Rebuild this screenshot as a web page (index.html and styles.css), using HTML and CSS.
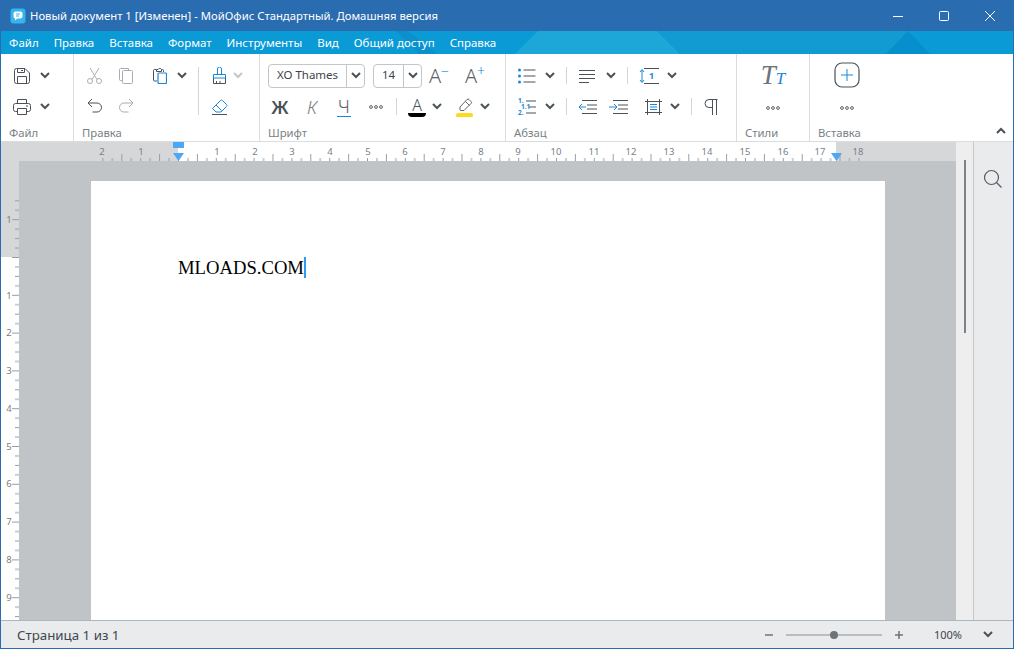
FILE: index.html
```html
<!DOCTYPE html>
<html lang="ru">
<head>
    <meta charset="UTF-8">
    <title>МойОфис Стандартный</title>
    <link rel="stylesheet" href="styles.css">
</head>
<body>
<svg class="defs" width="0" height="0">
    <symbol id="chev" viewBox="0 0 10 7"><path d="M1 1l4 4 4-4" fill="none" stroke="currentColor" stroke-width="2"/></symbol>
    <symbol id="dots" viewBox="0 0 14 4" ><g fill="none" stroke="currentColor"><circle cx="2" cy="2" r="1.4"/><circle cx="7" cy="2" r="1.4"/><circle cx="12" cy="2" r="1.4"/></g></symbol>
</svg>
<div class="window">
    <!-- заголовок -->
    <div class="titlebar">
        <svg class="app-icon" width="16" height="16" viewBox="0 0 16 16"><rect width="15" height="15" x="0.5" y="0.5" rx="3" fill="#35b4ee"/><path d="M3.500 5.500a2 2 0 0 1 2-2h5a2 2 0 0 1 2 2v3a2 2 0 0 1-2 2H7l-2 2v-2a2 2 0 0 1-1.500-2z" fill="#fff"/><path d="M6 6h4M6 8h3" stroke="#35b4ee"/></svg>
        <span class="title">Новый документ 1 [Изменен] - МойОфис Стандартный. Домашняя версия</span>
        <div class="win-btns">
            <svg width="12" height="12" viewBox="0 0 12 12"><path d="M1 6.500h10" stroke="#fff"/></svg>
            <svg width="12" height="12" viewBox="0 0 12 12"><rect x="1.500" y="1.500" width="9" height="9" rx="1" fill="none" stroke="#fff"/></svg>
            <svg width="12" height="12" viewBox="0 0 12 12"><path d="M1 1l10 10M11 1L1 11" stroke="#fff"/></svg>
        </div>
    </div>

    <!-- меню -->
    <div class="menubar">
        <svg class="menu-bg" width="1012" height="23" viewBox="0 0 1012 23">
            <path d="M537 0h119l23 23H514z" fill="#1ca7d8"/>
            <path d="M656 0h251l-22 23H679z" fill="#129bd2"/>
            <path d="M907 0l22 23h-44z" fill="#058fcc"/>
            <path d="M395 0h12l29 23h-18z" fill="#0a90cc"/>
        </svg>
        <span>Файл</span><span>Правка</span><span>Вставка</span><span>Формат</span><span>Инструменты</span><span>Вид</span><span>Общий доступ</span><span>Справка</span>
    </div>

    <!-- лента -->
    <div class="ribbon">
        <div class="group g-file">
            <div class="grid">
                <svg width="16" height="16" viewBox="0 0 16 16" class="ic"><path d="M2.500.5h8.500l4.500 4.500v8.500a2 2 0 0 1-2 2h-11a2 2 0 0 1-2-2v-11a2 2 0 0 1 2-2z" fill="none" stroke="currentColor"/><path d="M3.500.5v4h7v-4M7 2.500h2M3.500 15.500v-7h9v7" fill="none" stroke="currentColor"/></svg>
                <svg class="chev"><use href="#chev"/></svg>
                <svg width="18" height="16" viewBox="0 0 18 16" class="ic"><path d="M4.500 4.500v-4h9v4M4 12.500H2.500a2 2 0 0 1-2-2v-4a2 2 0 0 1 2-2h13a2 2 0 0 1 2 2v4a2 2 0 0 1-2 2H14" fill="none" stroke="currentColor"/><path d="M4.500 9.500h9v6h-9zM13 7h2" fill="none" stroke="currentColor"/></svg>
                <svg class="chev"><use href="#chev"/></svg>
            </div>
            <div class="group-label">Файл</div>
        </div>

        <div class="group g-edit">
            <div class="grid">
                <svg width="15" height="16" viewBox="0 0 15 16" class="off"><path d="M3 0l7 11.500M12 0 5 11.500" fill="none" stroke="currentColor"/><circle cx="3" cy="13" r="2.500" fill="none" stroke="currentColor"/><circle cx="12" cy="13" r="2.500" fill="none" stroke="currentColor"/></svg>
                <svg width="14" height="16" viewBox="0 0 14 16" class="off"><path d="M9.500 2.500v-2h-8a1 1 0 0 0-1 1v10a1 1 0 0 0 1 1h2" fill="none" stroke="currentColor"/><rect x="3.500" y="2.500" width="10" height="13" rx="1" fill="none" stroke="currentColor"/></svg>
                <svg width="14" height="17" viewBox="0 0 14 17" class="ic"><path d="M3.500 2.500h-2a1 1 0 0 0-1 1v9.500a1 1 0 0 0 1 1H4M10.500 5V3.500a1 1 0 0 0-1-1h-1M3.500 4.500v-2h1.500a2 2 0 0 1 3.500 0v2z" fill="none" stroke="currentColor"/><rect x="5" y="6" width="8.500" height="10.500" rx="1" fill="none" stroke="#1b87d8" stroke-width="1.200"/></svg>
                <svg class="chev"><use href="#chev"/></svg>
                <div class="sep tall"></div>
                <svg width="15" height="17" viewBox="0 0 15 17" class="ic"><path d="M5.500 7V2a2 2 0 0 1 4 0v5M1.500 7.500h12v3.500h-12z" fill="none" stroke="#1b87d8"/><path d="M1.500 11v5.500h12V11M4.500 16v-2M8 16v-2" fill="none" stroke="currentColor"/></svg>
                <svg class="chev dim"><use href="#chev"/></svg>
                <svg class="nudge" width="15" height="15" viewBox="0 0 15 15"><path d="M5 1 1 5l4 4M1 5h9a4.500 4.500 0 0 1 0 9H5.500" fill="none" stroke="#4a5258"/></svg>
                <svg class="off nudge" width="15" height="15" viewBox="0 0 15 15"><path d="M10 1l4 4-4 4M14 5H5a4.500 4.500 0 0 0 0 9h4.500" fill="none" stroke="currentColor"/></svg>
                <span></span><span></span>
                <svg width="17" height="16" viewBox="0 0 17 16" class="blue"><path d="M1.500 9.500 9.500 1.500a1.400 1.400 0 0 1 2 0l4 4a1.400 1.400 0 0 1 0 2l-5.500 5.500H5L1.500 9.500zM5 6l5.500 5.500" fill="none" stroke="currentColor"/><path d="M1 15.500h15" stroke="#4a5258"/></svg>
                <span></span>
            </div>
            <div class="group-label">Правка</div>
        </div>

        <div class="group g-font">
            <div class="font-row">
                <div class="combo font-name"><span>XO Thames</span><i><svg class="chev"><use href="#chev"/></svg></i></div>
                <div class="combo font-size"><span>14</span><i><svg class="chev"><use href="#chev"/></svg></i></div>
                <div class="grow-btn a-minus">A<sup>−</sup></div>
                <div class="grow-btn a-plus">A<sup>+</sup></div>
            </div>
            <div class="format-row">
                <b class="fmt bold">Ж</b>
                <em class="fmt ital">К</em>
                <u class="fmt under">Ч</u>
                <svg class="dots"><use href="#dots"/></svg>
                <div class="sep"></div>
                <div class="color-a">A</div>
                <svg class="chev"><use href="#chev"/></svg>
                <span></span>
                <svg width="20" height="21" viewBox="0 0 20 21" class="ic"><path d="M5 11 12 3.500a1.300 1.300 0 0 1 2 0l2 2a1.300 1.300 0 0 1 0 2l-7 7H5.500L5 14zM10.500 5.500l4 4" fill="none" stroke="currentColor" stroke-width=".9"/><rect x="1" y="17" width="17" height="4.500" rx="2.200" fill="#ffd91c"/></svg>
                <svg class="chev"><use href="#chev"/></svg>
            </div>
            <div class="group-label">Шрифт</div>
        </div>

        <div class="group g-para">
            <div class="para-row one">
                <svg width="18" height="16" viewBox="0 0 18 16" class="ic"><path d="M5.500 2h12M5.500 8h12M5.500 14h12" stroke="currentColor"/><g fill="#1b87d8"><circle cx="1.500" cy="2" r="1.500"/><circle cx="1.500" cy="8" r="1.500"/><circle cx="1.500" cy="14" r="1.500"/></g></svg>
                <svg class="chev"><use href="#chev"/></svg>
                <div class="sep"></div>
                <svg width="16" height="14" viewBox="0 0 16 14" class="ic"><path d="M0 1.500h16M0 5.500h16M0 9.500h16M0 13.500h10" stroke="currentColor"/></svg>
                <svg class="chev"><use href="#chev"/></svg>
                <div class="sep"></div>
                <svg width="20" height="16" viewBox="0 0 20 16" class="ic"><path d="M5 .5h15M5 15.500h15" stroke="currentColor"/><path d="M3 2v12M1 4l2-2.500L5 4M1 12l2 2.500L5 12" fill="none" stroke="#1b87d8"/><text x="10" y="11" class="mini">1</text></svg>
                <svg class="chev"><use href="#chev"/></svg>
            </div>
            <div class="para-row two">
                <div class="num-list">
                    <span>1.</span><span class="lvl2">1.1</span><span>2.</span>
                    <svg width="12" height="16" viewBox="0 0 12 16" class="ic"><path d="M2 2h10M5 8h7M2 14h10" stroke="currentColor"/></svg>
                </div>
                <svg class="chev"><use href="#chev"/></svg>
                <div class="sep"></div>
                <svg width="19" height="14" viewBox="0 0 19 14" class="ic"><path d="M4 .5h15M9 5h10M9 9h10M4 13.500h15" stroke="currentColor"/><path d="M8 7H1M4 4 1 7l3 3" fill="none" stroke="#1b87d8"/></svg>
                <svg width="19" height="14" viewBox="0 0 19 14" class="ic"><path d="M4 .5h15M9 5h10M9 9h10M4 13.500h15" stroke="currentColor"/><path d="M0 7h7M5 4l3 3-3 3" fill="none" stroke="#1b87d8"/></svg>
                <svg width="17" height="16" viewBox="0 0 17 16" class="ic"><path d="M0 2.500h17M0 13.500h17M2.500 0v16M14.500 0v16" stroke="currentColor" fill="none"/><path d="M5 5.500h7M5 8h7M5 10.500h7" stroke="#1b87d8"/></svg>
                <svg class="chev"><use href="#chev"/></svg>
                <div class="sep"></div>
                <svg width="14" height="16" viewBox="0 0 14 16" class="ic"><path d="M13.500.5H5a4 4 0 0 0 0 8h3.500M8.500.5V16M12.500.5V16" fill="none" stroke="currentColor"/></svg>
            </div>
            <div class="group-label">Абзац</div>
        </div>

        <div class="group g-styles">
            <div class="big-tool">
                <div class="tt"><span>T</span><span class="tt-small">T</span></div>
                <svg class="dots"><use href="#dots"/></svg>
            </div>
            <div class="group-label">Стили</div>
        </div>

        <div class="group g-insert">
            <div class="big-tool">
                <svg width="26" height="26" viewBox="0 0 26 26" class="ic"><rect x="1" y="1" width="24" height="24" rx="7" fill="none" stroke="currentColor" stroke-width="1.200"/><path d="M13 7v12M7 13h12" stroke="#1b87d8"/></svg>
                <svg class="dots"><use href="#dots"/></svg>
            </div>
            <div class="group-label">Вставка</div>
            <svg class="collapse" width="10" height="7" viewBox="0 0 10 7"><path d="M1 6l4-4 4 4" fill="none" stroke="#4a5258" stroke-width="2"/></svg>
        </div>
    </div>

    <!-- рабочая область -->
    <div class="workspace">
        <div class="doc-col">
            <div class="hruler">
                <svg width="955" height="19" viewBox="0 0 955 19">
                    <defs>
                        <pattern id="hticks" x="177" y="0" width="37.800" height="19" patternUnits="userSpaceOnUse">
                            <path d="M.5 16v3M9.950 16v3M19.400 12v7M28.850 16v3" stroke="#9a9ea2" fill="none"/>
                        </pattern>
                    </defs>
                    <rect width="955" height="19" fill="#d5d7d9"/>
                    <rect x="177" width="658" height="19" fill="#fff"/>
                    <rect x="100" width="765" y="12" height="7" fill="url(#hticks)"/>
                    <g class="rule-num" text-anchor="middle">
                        <text x="101" y="13">2</text><text x="140" y="13">1</text>
                        <text x="216" y="13">1</text><text x="254" y="13">2</text><text x="291" y="13">3</text><text x="329" y="13">4</text><text x="367" y="13">5</text><text x="404" y="13">6</text><text x="442" y="13">7</text><text x="480" y="13">8</text><text x="517" y="13">9</text><text x="555" y="13">10</text><text x="593" y="13">11</text><text x="630" y="13">12</text><text x="668" y="13">13</text><text x="706" y="13">14</text><text x="744" y="13">15</text><text x="782" y="13">16</text><text x="819" y="13">17</text><text x="857" y="13">18</text>
                    </g>
                    <rect x="172" y="0" width="11" height="6" fill="#4aa8f5"/>
                    <path d="M172 11h11l-5.500 8z" fill="#4aa8f5"/>
                    <path d="M830 11h11l-5.500 8z" fill="#4aa8f5"/>
                </svg>
            </div>
            <div class="doc-body">
                <div class="vruler">
                    <svg width="18" height="459" viewBox="0 0 18 459">
                        <defs>
                            <pattern id="vticks" x="0" y="1.500" width="18" height="37.800" patternUnits="userSpaceOnUse">
                                <path d="M14 .5h4M14 9.950h4M11 19.400h7M14 28.850h4" stroke="#9a9ea2" fill="none"/>
                            </pattern>
                        </defs>
                        <rect width="18" height="96" fill="#d5d7d9"/>
                        <rect y="96" width="18" height="363" fill="#fff"/>
                        <rect x="0" y="38" width="18" height="421" fill="url(#vticks)"/>
                        <g class="rule-num" text-anchor="middle">
                            <text x="8" y="62">1</text>
                            <text x="8" y="138">1</text><text x="8" y="175">2</text><text x="8" y="213">3</text><text x="8" y="251">4</text><text x="8" y="289">5</text><text x="8" y="326">6</text><text x="8" y="364">7</text><text x="8" y="402">8</text><text x="8" y="440">9</text>
                        </g>
                    </svg>
                </div>
                <div class="canvas">
                    <div class="page">
                        <span class="page-text">MLOADS.COM</span><span class="caret"></span>
                    </div>
                </div>
            </div>
        </div>
        <div class="scrollbar"><div class="thumb"></div></div>
        <div class="sidepanel">
            <svg width="20" height="20" viewBox="0 0 20 20"><circle cx="8.500" cy="8.500" r="7" fill="none" stroke="#555c62" stroke-width="1.200"/><path d="M13.500 13.500l5 5" stroke="#555c62" stroke-width="1.200"/></svg>
        </div>
    </div>

    <!-- строка состояния -->
    <div class="statusbar">
        <span class="page-count">Страница 1 из 1</span>
        <div class="zoom">
            <svg width="10" height="10" viewBox="0 0 10 10"><path d="M1 5h8" stroke="#6d7479" stroke-width="1.500"/></svg>
            <div class="slider"><div class="knob"></div></div>
            <svg width="10" height="10" viewBox="0 0 10 10"><path d="M1 5h8M5 1v8" stroke="#6d7479" stroke-width="1.500"/></svg>
            <span class="percent">100%</span>
            <svg class="chev"><use href="#chev"/></svg>
        </div>
    </div>
</div>
</body>
</html>
```
FILE: styles.css
```css
* {
    box-sizing: border-box;
}
html, body {
    margin: 0;
    height: 100%;
    overflow: hidden;
}
body {
    font-family: "Noto Sans", "Open Sans", sans-serif;
    font-size: 12px;
    color: #4a5258;
    background: #fff;
}
.defs {
    position: absolute;
}
svg {
    display: block;
}
.window {
    width: 1014px;
    height: 649px;
    border: 1px solid #2a6cb0;
    border-top: 0;
    display: flex;
    flex-direction: column;
}

/* заголовок */
.titlebar {
    height: 31px;
    background: #2a6cb0;
    display: flex;
    align-items: center;
    padding-left: 9px;
    color: #fff;
}
.title {
    margin-left: 4px;
    font-size: 11.300px;
}
.win-btns {
    margin-left: auto;
    display: flex;
    gap: 34px;
    padding-right: 17px;
}

/* меню */
.menubar {
    position: relative;
    height: 23px;
    background: #0a9ad5;
    display: flex;
    align-items: center;
    gap: 15px;
    padding-left: 8px;
    color: #fff;
    font-size: 11.500px;
}
.menubar span {
    position: relative;
}
.menu-bg {
    position: absolute;
    left: 0;
    top: 0;
}

/* лента */
.ribbon {
    height: 88px;
    display: flex;
    border-bottom: 1px solid #dcdcdc;
    flex-shrink: 0;
}
.group {
    position: relative;
    padding-top: 6px;
    border-right: 1px solid #dcdcdc;
    height: 87px;
}
.group-label {
    position: absolute;
    left: 8px;
    top: 69px;
    color: #787f85;
    font-size: 11.300px;
    line-height: 20px;
}
.g-file {
    width: 73px;
    padding-left: 6px;
}
.g-edit {
    width: 186px;
    padding-left: 4px;
}
.g-font {
    width: 246px;
    padding-left: 4px;
}
.g-para {
    width: 231px;
    padding-left: 5px;
}
.g-styles {
    width: 73px;
}
.g-insert {
    flex: 1;
    border-right: 0;
}
.grid, .para-row, .format-row {
    display: grid;
    place-items: center;
}
.g-file .grid {
    grid-template-columns: 30px 16px;
    grid-auto-rows: 31px;
}
.g-edit .grid {
    grid-template-columns: 32px 32px 36px 8px 24px 18px 20px;
    grid-auto-rows: 31px;
}
.nudge {
    margin-bottom: 3px;
}
.ic {
    color: #4a5258;
}
.off {
    color: #a9adb1;
}
.blue {
    color: #1b87d8;
}
.chev {
    width: 10px;
    height: 7px;
    color: #4a5258;
}
.chev.dim {
    color: #c4c7ca;
}
.dots {
    width: 14px;
    height: 4px;
    color: #5a6167;
}
.sep {
    width: 1px;
    height: 17px;
    background: #d4d6d8;
}
.sep.tall {
    height: 48px;
    grid-row: span 2;
    grid-column: 5;
}

/* шрифт */
.font-row {
    height: 31px;
    display: flex;
    align-items: center;
    margin-left: 4px;
}
.combo {
    display: flex;
    height: 24px;
    border: 1px solid #c3c6c9;
    border-radius: 4px;
    align-items: center;
    color: #3c4348;
}
.combo span {
    flex: 1;
    text-align: center;
    font-size: 11.500px;
    padding-bottom: 2px;
}
.combo i {
    display: flex;
    align-items: center;
    justify-content: center;
    height: 100%;
    width: 18px;
    border-left: 1px solid #c3c6c9;
}
.font-name {
    width: 97px;
    margin-right: 8px;
}
.font-size {
    width: 49px;
}
.grow-btn {
    font-size: 20px;
    font-weight: 300;
    line-height: 20px;
    text-align: center;
    color: #5a6167;
    white-space: nowrap;
}
.grow-btn sup {
    color: #1b87d8;
    font-size: 14px;
    line-height: 0;
    vertical-align: 7px;
}
.a-minus {
    width: 34px;
}
.a-plus {
    width: 38px;
}
.format-row {
    height: 31px;
    grid-template-columns: 32px 32px 32px 32px 8px 34px 6px 10px 30px 10px;
}
.fmt {
    font-size: 18px;
    line-height: 22px;
    text-decoration: none;
    color: #4a5258;
}
.bold {
    font-weight: 600;
}
.ital {
    font-weight: 300;
    color: #757b81;
    font-style: italic;
}
.under {
    font-weight: 300;
    color: #5a6167;
    border-bottom: 1px solid #1b87d8;
    line-height: 19px;
    padding: 0 1px;
}
.color-a {
    font-size: 16px;
    line-height: 16px;
    font-weight: 300;
    width: 18px;
    text-align: center;
    color: #4a5258;
    border-bottom: 4px solid #000;
    border-radius: 0 0 4px 4px;
}

/* абзац */
.para-row {
    height: 31px;
}
.para-row.one {
    grid-template-columns: 32px 14px 18px 24px 24px 8px 36px 10px;
}
.para-row.two {
    grid-template-columns: 32px 14px 18px 24px 38px 32px 12px 20px 20px;
}
.mini {
    font-size: 9px;
    font-weight: 700;
    fill: #1b87d8;
}
.num-list {
    position: relative;
    width: 18px;
    height: 18px;
    display: flex;
    flex-direction: column;
    color: #1b87d8;
    font-size: 6.500px;
    font-weight: 700;
    line-height: 6px;
}
.num-list svg {
    position: absolute;
    right: 0;
    top: 1px;
}
.lvl2 {
    padding-left: 3px;
}

/* стили, вставка */
.big-tool {
    display: flex;
    flex-direction: column;
    align-items: center;
    height: 62px;
}
.big-tool > .dots {
    margin-top: auto;
    margin-bottom: 12px;
}
.big-tool > svg.ic {
    margin-top: 2px;
}
.tt {
    display: flex;
    align-items: baseline;
    font-family: "Liberation Serif", serif;
    font-style: italic;
    font-size: 27px;
    line-height: 30px;
    color: #6d7378;
}
.tt-small {
    font-size: 17px;
    color: #1b87d8;
}
.g-insert .big-tool {
    width: 74px;
}
.collapse {
    position: absolute;
    right: 7px;
    top: 73px;
}

/* рабочая область */
.workspace {
    flex: 1;
    display: flex;
    min-height: 0;
}
.doc-col {
    width: 955px;
    display: flex;
    flex-direction: column;
}
.hruler {
    height: 19px;
}
.rule-num {
    font-size: 9.500px;
    fill: #7a8086;
}
.doc-body {
    flex: 1;
    display: flex;
    min-height: 0;
}
.vruler {
    width: 18px;
}
.canvas {
    flex: 1;
    background: #c1c4c6;
    padding: 20px 71px 0 72px;
    overflow: hidden;
}
.page {
    height: 100%;
    background: #fff;
    padding: 76px 0 0 87px;
    display: flex;
    align-items: flex-start;
}
.page-text {
    font-family: "Liberation Serif", serif;
    font-size: 18.670px;
    line-height: 21px;
    color: #000;
}
.caret {
    width: 2px;
    height: 21px;
    background: #2f9bf0;
}
.scrollbar {
    width: 17px;
    background: #eeeeee;
    padding: 18px 0 0 8px;
}
.thumb {
    width: 2px;
    height: 173px;
    background: #7d8286;
}
.sidepanel {
    flex: 1;
    background: #e9ebed;
    border-left: 1px solid #c4c9cd;
    padding: 27px 0 0 9px;
}

/* строка состояния */
.statusbar {
    height: 28px;
    background: #e9ebed;
    border-top: 1px solid #aeb6bd;
    display: flex;
    align-items: center;
    flex-shrink: 0;
    padding-left: 16px;
}
.page-count {
    font-size: 13.300px;
    color: #40474c;
}
.zoom {
    margin-left: auto;
    display: flex;
    align-items: center;
    padding-right: 20px;
}
.slider {
    position: relative;
    width: 96px;
    height: 2px;
    background: #b9bdc0;
    margin: 0 12px;
}
.knob {
    position: absolute;
    left: 44px;
    top: -3px;
    width: 8px;
    height: 8px;
    border-radius: 50%;
    background: #6d7479;
}
.percent {
    margin: 0 21px 0 30px;
    font-size: 11px;
    color: #40474c;
}
```
